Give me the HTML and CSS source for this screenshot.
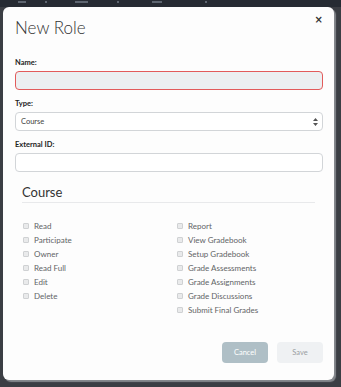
FILE: index.html
```html
<!DOCTYPE html>
<html lang="en">
<head>
    <meta charset="UTF-8">
    <meta name="viewport" content="width=device-width, initial-scale=1.0">
    <title>New Role</title>
    <link rel="stylesheet" href="styles.css">
</head>
<body>
    <div class="topbar">
        <span class="mark m1"></span>
        <span class="mark m2"></span>
        <span class="mark m3"></span>
        <span class="mark m4"></span>
        <span class="mark m5"></span>
        <span class="mark m6"></span>
    </div>

    <div class="page">
        <div class="modal">
            <div class="modal-header">
                <h1>New Role</h1>
                <button class="close">&times;</button>
            </div>

            <div class="field">
                <label>Name:</label>
                <input type="text" class="input invalid">
            </div>

            <div class="field">
                <label>Type:</label>
                <div class="select-wrap">
                    <select class="input select">
                        <option>Course</option>
                    </select>
                    <svg class="arrows" width="5" height="8" viewBox="0 0 5 8">
                        <path d="M2.5 0 L5 3 L0 3 Z M0 5 L5 5 L2.5 8 Z" fill="#555"/>
                    </svg>
                </div>
            </div>

            <div class="field">
                <label>External ID:</label>
                <input type="text" class="input">
            </div>

            <!-- permissions -->
            <div class="perms">
                <h2>Course</h2>
                <div class="perm-grid">
                    <div class="perm-col">
                        <label class="check"><input type="checkbox"> Read</label>
                        <label class="check"><input type="checkbox"> Participate</label>
                        <label class="check"><input type="checkbox"> Owner</label>
                        <label class="check"><input type="checkbox"> Read Full</label>
                        <label class="check"><input type="checkbox"> Edit</label>
                        <label class="check"><input type="checkbox"> Delete</label>
                    </div>
                    <div class="perm-col">
                        <label class="check"><input type="checkbox"> Report</label>
                        <label class="check"><input type="checkbox"> View Gradebook</label>
                        <label class="check"><input type="checkbox"> Setup Gradebook</label>
                        <label class="check"><input type="checkbox"> Grade Assessments</label>
                        <label class="check"><input type="checkbox"> Grade Assignments</label>
                        <label class="check"><input type="checkbox"> Grade Discussions</label>
                        <label class="check"><input type="checkbox"> Submit Final Grades</label>
                    </div>
                </div>
            </div>

            <div class="modal-footer">
                <button class="btn btn-cancel">Cancel</button>
                <button class="btn btn-save">Save</button>
            </div>
        </div>
    </div>
</body>
</html>
```

FILE: styles.css
```css
body {
    margin: 0;
    padding: 0;
    background: #3b3e44;
    font-family: 'Lato', 'Open Sans', sans-serif;
    color: #333;
    overflow: hidden;
}

/* background app strip */
.topbar {
    height: 7px;
    background: #262b33;
    position: relative;
}

.mark {
    position: absolute;
    top: 1px;
    height: 2px;
    background: #5d6570;
}
.m1 { left: 18px; width: 8px; }
.m2 { left: 45px; width: 2px; }
.m3 { left: 75px; width: 13px; }
.m4 { left: 117px; width: 2px; }
.m5 { left: 152px; width: 10px; }
.m6 { left: 205px; width: 2px; }

.page {
    padding: 0 7px 6px 3px;
}

.modal {
    background: #fdfdfd;
    width: 331px;
    height: 373px;
    box-sizing: border-box;
    border-radius: 6px;
    padding: 9px 11px 17px 12px;
    box-shadow: 2px 2px 1px #85888d;
    display: flex;
    flex-direction: column;
}

.modal-header {
    display: flex;
    justify-content: space-between;
    align-items: flex-start;
    margin-bottom: 20px;
}

h1 {
    font-size: 17px;
    font-weight: 300;
    line-height: 20px;
    margin: 2px 0 0 0;
    color: #333;
}

.close {
    background: none;
    border: none;
    padding: 0;
    margin: -1px 0 0 0;
    font-size: 10px;
    font-weight: 900;
    line-height: 10px;
    color: #333;
    font-family: 'DejaVu Sans', sans-serif;
}

.field {
    margin-bottom: 9px;
}

.field label {
    display: block;
    font-size: 7.5px;
    font-weight: 700;
    line-height: 10px;
    color: #222;
    margin-bottom: 3px;
}

.input {
    display: block;
    width: 100%;
    box-sizing: border-box;
    height: 19px;
    border: 1px solid #d2d5d8;
    border-radius: 4px;
    background: #fff;
    padding: 0 5px;
    font-family: 'Lato', sans-serif;
    font-size: 7.5px;
    color: #444;
    margin: 0;
}

.invalid {
    border-color: #e25b5b;
    background: #eceff1;
}

.select-wrap {
    position: relative;
}

.select {
    appearance: none;
    -webkit-appearance: none;
    height: 19px;
}

.arrows {
    position: absolute;
    right: 5px;
    top: 6px;
}

.perms {
    margin: 3px 8px 0 7px;
}

h2 {
    font-size: 13px;
    font-weight: 400;
    line-height: 16px;
    margin: 0;
    padding-bottom: 2px;
    border-bottom: 1px solid #e8e9eb;
    color: #333;
}

.perm-grid {
    display: grid;
    grid-template-columns: 154px 1fr;
    padding: 16px 0 0 1px;
}

.perm-col {
    display: flex;
    flex-direction: column;
}

.check {
    display: flex;
    align-items: center;
    gap: 5px;
    height: 14px;
    font-size: 8px;
    color: #626466;
}

.check input {
    appearance: none;
    -webkit-appearance: none;
    width: 6px;
    height: 6px;
    margin: 0;
    border: 1px solid #cfd1d3;
    border-radius: 1px;
    background: #e9eaeb;
    box-sizing: border-box;
}

.modal-footer {
    margin-top: auto;
    display: flex;
    justify-content: flex-end;
    gap: 9px;
}

.btn {
    width: 46px;
    height: 21px;
    border: none;
    border-radius: 4px;
    font-family: 'Lato', sans-serif;
    font-size: 7.5px;
}

.btn-cancel {
    background: #afbfc6;
    color: #fff;
}

.btn-save {
    background: #eff1f3;
    color: #9a9ea2;
}
```
